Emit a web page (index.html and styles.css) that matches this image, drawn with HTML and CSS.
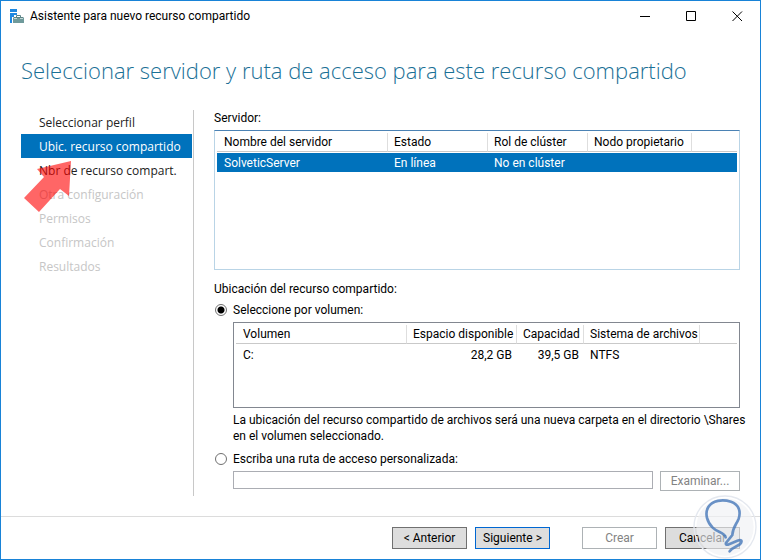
FILE: index.html
```html
<!DOCTYPE html>
<html lang="es">
<head>
<meta charset="utf-8">
<meta name="viewport" content="width=device-width, initial-scale=1">
<title>Asistente para nuevo recurso compartido</title>
<link rel="stylesheet" href="styles.css">
</head>
<body>
<div class="window">
  <header class="titlebar">
    <svg class="app-icon" viewBox="0 0 14 14" aria-hidden="true">
      <path fill="#1e88e0" d="M0 0h7v3H0zM0 4h7v2H4v2H2v6H0z"/>
      <path fill="#6f9a9b" d="M3 9h11v5H3z"/>
      <path fill="none" stroke="#5c8587" d="M6.500 8.500v-2h4v2M3.500 8.500h10"/>
      <path fill="none" stroke="#c4d8d8" d="M4 9.500h3M10 9.500h3"/>
    </svg>
    <span class="title">Asistente para nuevo recurso compartido</span>
    <div class="caption">
      <button type="button" aria-label="Minimizar"><svg viewBox="0 0 11 11"><path d="M0 5.500h10"/></svg></button>
      <button type="button" aria-label="Maximizar"><svg viewBox="0 0 11 11"><path d="M.5.5h9v9h-9z"/></svg></button>
      <button type="button" aria-label="Cerrar"><svg viewBox="0 0 11 11"><path d="M.5.5l9.500 9.500M10 .5L.5 10"/></svg></button>
    </div>
  </header>

  <h1>Seleccionar servidor y ruta de acceso para este recurso compartido</h1>

  <div class="body">
    <nav class="steps">
      <button type="button">Seleccionar perfil</button>
      <button type="button" class="current" aria-current="step">Ubic. recurso compartido</button>
      <button type="button">Nbr de recurso compart.</button>
      <button type="button" disabled>Otra configuración</button>
      <button type="button" disabled>Permisos</button>
      <button type="button" disabled>Confirmación</button>
      <button type="button" disabled>Resultados</button>
      <svg class="pointer" viewBox="0 0 47 51" aria-hidden="true"><path d="M47 0L13 8l7 8L0 37l15 14 21-23 9 7z"/></svg>
    </nav>

    <main class="content">
      <h2 id="server-label">Servidor:</h2>
      <div class="list servers">
        <table aria-labelledby="server-label">
          <colgroup><col class="w171"><col class="w100"><col class="w100"><col class="w104"><col></colgroup>
          <thead><tr><th>Nombre del servidor</th><th>Estado</th><th>Rol de clúster</th><th>Nodo propietario</th><td></td></tr></thead>
          <tbody><tr class="selected"><td>SolveticServer</td><td>En línea</td><td>No en clúster</td><td></td><td></td></tr></tbody>
        </table>
      </div>

      <h2 class="location">Ubicación del recurso compartido:</h2>
      <div class="option">
        <input type="radio" name="location" id="by-volume" checked>
        <label for="by-volume">Seleccione por volumen:</label>
      </div>
      <div class="nested">
        <div class="list volumes">
          <table aria-label="Volúmenes">
            <colgroup><col class="w171"><col class="w110"><col class="w67"><col class="w116"><col></colgroup>
            <thead><tr><th>Volumen</th><th class="num">Espacio disponible</th><th class="num">Capacidad</th><th>Sistema de archivos</th><td></td></tr></thead>
            <tbody><tr><td>C:</td><td class="num">28,2 GB</td><td class="num">39,5 GB</td><td>NTFS</td><td></td></tr></tbody>
          </table>
        </div>
        <p>La ubicación del recurso compartido de archivos será una nueva carpeta en el directorio \Shares en el volumen seleccionado.</p>
      </div>
      <div class="option">
        <input type="radio" name="location" id="by-path">
        <label for="by-path" id="path-label">Escriba una ruta de acceso personalizada:</label>
      </div>
      <div class="nested path">
        <input type="text" aria-labelledby="path-label" disabled>
        <button type="button" class="btn small" disabled>Examinar...</button>
      </div>
    </main>
  </div>

  <footer class="actions">
    <button type="button" class="btn">&lt; Anterior</button>
    <button type="button" class="btn primary">Siguiente &gt;</button>
    <button type="button" class="btn create" disabled>Crear</button>
    <button type="button" class="btn">Cancelar</button>
    <svg class="watermark" viewBox="0 0 228 225" aria-hidden="true">
      <circle class="halo" cx="120" cy="126" r="93"/>
      <circle class="disc" cx="120" cy="126" r="86"/>
      <path d="M122 157C118 142 98 143 83 128C67 112 58 86 70 66C82 46 112 42 138 50C162 58 168 80 161 101C154 119 143 127 142 150L123 174Q121 180 129 179L157 167Q174 162 168 174C162 184 145 184 134 199"/>
    </svg>
  </footer>
</div>
</body>
</html>
```
FILE: styles.css
```css
* { box-sizing: border-box; }

body {
  margin: 0;
  background: #fff;
  color: #000;
  font: 12px/16px Roboto, "Noto Sans", sans-serif;
}

button, input { font: inherit; color: inherit; }

.window {
  display: flex;
  flex-direction: column;
  min-height: 100vh;
  border: 1px solid #1883d7;
}

.titlebar {
  display: flex;
  align-items: center;
  height: 30px;
  padding-left: 9px;
}

.app-icon { width: 14px; height: 14px; margin-right: 6px; }

.title { flex: 1; }

.caption { display: flex; }

.caption button {
  display: grid;
  place-items: center;
  width: 46px;
  height: 30px;
  padding: 0;
  border: 0;
  background: none;
}

.caption svg {
  width: 11px;
  height: 11px;
  fill: none;
  stroke: #000;
}

h1 {
  margin: 22px 20px 23px;
  color: #1a7096;
  font-family: "Open Sans", sans-serif;
  font-size: 22px;
  line-height: 34px;
  font-weight: 300;
}

.body {
  display: flex;
  flex: 1;
  padding: 0 20px 20px;
}

.steps {
  position: relative;
  display: flex;
  flex-direction: column;
  width: 173px;
  padding-right: 1px;
  border-right: 1px solid #c8c8c8;
}

.steps button {
  height: 24px;
  padding: 2px 0 0 18px;
  border: 0;
  background: none;
  color: #222;
  font-family: "Open Sans", sans-serif;
  text-align: left;
  white-space: nowrap;
}

.steps .current { background: #0072bc; color: #fff; }

.steps button:disabled { color: #c6c6c6; }

.pointer {
  position: absolute;
  left: 3px;
  top: 51px;
  width: 47px;
  height: 51px;
  fill: rgba(255, 0, 0, 0.6);
  pointer-events: none;
}

.content { flex: 1; margin-left: 20px; }

h2 { margin: 0; font: inherit; }

.location { margin-top: 11px; }

.list { padding: 2px; border: 1px solid #828790; }

.servers {
  height: 140px;
  margin-top: 4px;
  border-color: #b9d4e6;
  border-top-color: #4b82b4;
}

.volumes { height: 86px; }

table {
  width: 100%;
  table-layout: fixed;
  border-collapse: separate;
  border-spacing: 0;
}

.w171 { width: 171px; }
.w116 { width: 116px; }
.w110 { width: 110px; }
.w104 { width: 104px; }
.w100 { width: 100px; }
.w67 { width: 67px; }

th, td {
  height: 20px;
  padding: 0 0 0 7px;
  font-weight: 400;
  text-align: left;
  white-space: nowrap;
}

thead th, thead td { height: 19px; border-bottom: 1px solid #c9c9c9; }

thead th { border-right: 1px solid #dedede; }

tbody td { border-top: 1px solid #fff; }

th + th, td + td { padding-left: 6px; }

.num { padding-right: 5px; text-align: right; }

.selected td { background: #0072bc; color: #fff; }

.option {
  display: flex;
  align-items: center;
  gap: 6px;
  margin-top: 5px;
}

.option input {
  appearance: none;
  width: 12px;
  height: 12px;
  margin: 0 0 0 1px;
  border: 1px solid #707070;
  border-radius: 50%;
}

.option input:checked { background: radial-gradient(circle, #000 3px, #fff 4px); }

.nested { margin: 4px 0 0 19px; }

/* The note may run a little past the list, into the page margin. */
.nested p { margin: 4px -12px 7px 0; }

.path { display: flex; gap: 7px; }

.path input {
  flex: 1;
  min-width: 0;
  height: 18px;
  border: 1px solid #abadb3;
  background: #fff;
}

.btn {
  width: 75px;
  height: 22px;
  padding: 0;
  border: 1px solid #707070;
  background: #ddd;
  white-space: nowrap;
}

.btn.small { width: 80px; height: 20px; }

.btn.primary { border-color: #0067d2; }

.btn:disabled {
  border-color: #adb2b5;
  background: #fff;
  color: #838383;
}

.actions {
  position: relative;
  display: flex;
  justify-content: flex-end;
  gap: 8px;
  padding: 10px 20px;
  border-top: 1px solid #dcdcdc;
}

.create { margin-left: 24px; }

.watermark {
  position: absolute;
  right: -1px;
  bottom: -1px;
  width: 76px;
  height: 75px;
  fill: none;
  pointer-events: none;
}

.watermark .halo { stroke: #e4e8ef; stroke-width: 4; }

.watermark .disc { fill: rgba(240, 241, 244, 0.65); }

.watermark path {
  stroke: rgba(70, 120, 185, 0.8);
  stroke-width: 8;
  stroke-linecap: round;
}
```
